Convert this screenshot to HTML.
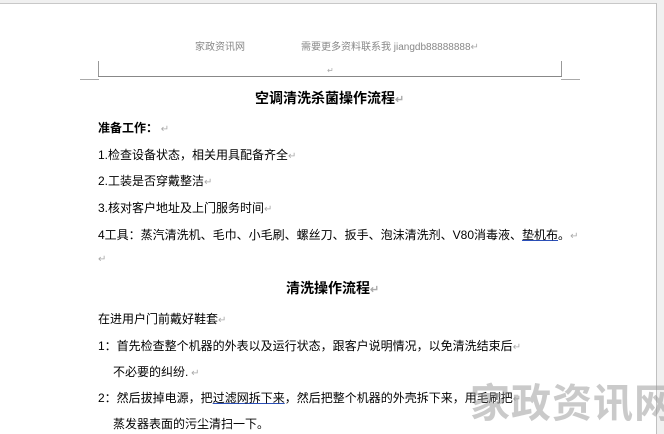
<!DOCTYPE html>
<html><head><meta charset="utf-8"><style>
body{margin:0;width:664px;height:422px;overflow:hidden;background:#f0f0f0;position:relative;font-family:"Liberation Sans","SimSun","Noto Sans CJK SC",sans-serif;}
.page{position:absolute;left:0;top:3px;width:656px;height:430px;background:#fff;border-top:1px solid #c8c8c8;border-right:1px solid #c0c0c0;}
.t{position:absolute;white-space:nowrap;font-size:12px;color:#000;line-height:14px;}
.m{color:#aaa;font-size:10px;}
.ln{position:absolute;background:#999;}
.wm{position:absolute;left:470px;top:378px;font-size:40px;font-weight:bold;color:rgba(150,150,150,.5);letter-spacing:1px;font-family:"Noto Sans CJK SC",sans-serif;white-space:nowrap;line-height:44px;}
</style></head><body>
<div class="page"></div>
<div class="t" style="left:195px;top:41px;font-size:10px;color:#888">家政资讯网</div>
<div class="t" style="left:301px;top:41px;font-size:10px;color:#888">需要更多资料联系我 jiangdb88888888<span class="m">↵</span></div>
<div class="ln" style="left:98px;top:61px;width:1px;height:16px"></div>
<div class="ln" style="left:561px;top:61px;width:1px;height:16px"></div>
<div class="ln" style="left:98px;top:76px;width:464px;height:1px;background:#888"></div>
<div class="ln" style="left:80px;top:79px;width:19px;height:1px;background:#aaa"></div>
<div class="ln" style="left:561px;top:79px;width:19px;height:1px;background:#aaa"></div>
<div class="t m" style="left:327px;top:64px;font-size:8px">↵</div>
<div class="t" style="left:255px;top:90px;font-size:14px;font-weight:bold;line-height:16px">空调清洗杀菌操作流程<span class="m" style="font-size:11px">↵</span></div>
<div class="t" style="left:98px;top:121px;font-weight:bold">准备工作：<span class="m" style="font-weight:normal"> ↵</span></div>
<div class="t" style="left:98px;top:148px">1.检查设备状态，相关用具配备齐全<span class="m">↵</span></div>
<div class="t" style="left:98px;top:174px">2.工装是否穿戴整洁<span class="m">↵</span></div>
<div class="t" style="left:98px;top:201px">3.核对客户地址及上门服务时间<span class="m">↵</span></div>
<div class="t" style="left:98px;top:228px">4工具：蒸汽清洗机、毛巾、小毛刷、螺丝刀、扳手、泡沫清洗剂、V80消毒液、<span style="text-decoration:underline;text-decoration-color:#2b4fb8">垫机布</span>。<span class="m">↵</span></div>
<div class="t m" style="left:98px;top:253px">↵</div>
<div class="t" style="left:286px;top:280px;font-size:14px;font-weight:bold;line-height:16px">清洗操作流程<span class="m" style="font-size:11px">↵</span></div>
<div class="t" style="left:98px;top:312px">在进用户门前戴好鞋套<span class="m">↵</span></div>
<div class="t" style="left:98px;top:339px">1：首先检查整个机器的外表以及运行状态，跟客户说明情况，以免清洗结束后<span class="m">↵</span></div>
<div class="t" style="left:113px;top:365px">不必要的纠纷.<span class="m"> ↵</span></div>
<div class="t" style="left:98px;top:391px">2：然后拔掉电源，把<span style="text-decoration:underline;text-decoration-color:#2b4fb8">过滤网拆下来</span>，然后把整个机器的外壳拆下来，用毛刷把<span class="m">↵</span></div>
<div class="t" style="left:113px;top:417px">蒸发器表面的污尘清扫一下。</div>
<div class="wm">家政资讯网</div>
</body></html>
